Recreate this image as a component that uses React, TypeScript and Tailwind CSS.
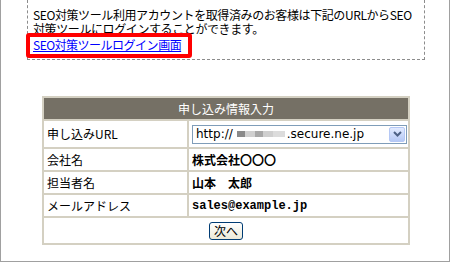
const jp = "font-['MS_UI_Gothic','Noto_Sans_CJK_JP',sans-serif]"

const Row = ({ label, children, h = "h-[21px]" }: { label: string; children: React.ReactNode; h?: string }) => (
  <>
    <div className={`${h} bg-white flex items-center pl-[3px]`}>{label}</div>
    <div className={`${h} bg-white flex items-center pl-[3px]`}>{children}</div>
  </>
)

const App = () => {
  return (
    <div className={`w-[450px] h-[262px] overflow-hidden bg-white border-x border-b border-[#a0a0a0] text-[12px] leading-[14px] text-black ${jp}`}>
      <div className="relative ml-[26px] w-[398px] border-x border-b border-dashed border-[#8c8c8c] pl-[5px] pt-[8px] pb-[7px] whitespace-nowrap">
        <p className="tracking-[-0.4px]">SEO対策ツール利用アカウントを取得済みのお客様は下記のURLからSEO</p>
        <p className="tracking-[-0.4px]">対策ツールにログインすることができます。</p>
        <a href="#" className="block mt-[2px] text-[#0000ff] underline w-fit tracking-[-0.5px]">SEO対策ツールログイン画面</a>
        <div className="absolute left-[-2px] top-[33px] w-[166px] h-[25px] border-[4px] border-[#ff0000] rounded-[3px]" />
      </div>

      <div className="mt-[36px] ml-[41px] w-[368px] border-2 border-[#d4d0c2] bg-[#d4d0c2]">
        <div className="h-[21px] bg-[#757065] text-white flex items-center justify-center">申し込み情報入力</div>
        <div className="grid grid-cols-[143px_1fr] gap-[2px] mt-[2px]">
          <Row label="申し込みURL" h="h-[26px]">
            <div className="w-[215px] h-[19px] border border-[#7f9db9] flex items-center justify-between pl-[3px] pr-[1px]">
              <div className="flex items-center font-['DejaVu_Sans',sans-serif] text-[12px]">
                <span>http://</span>
                <span className="flex ml-[4px] mr-[2px]">
                  <span className="w-[8px] h-[6px] bg-[#8a8a8a]" />
                  <span className="w-[10px] h-[6px] bg-[#d0d0d0]" />
                  <span className="w-[8px] h-[6px] bg-[#a8a8a8]" />
                  <span className="w-[10px] h-[6px] bg-[#cfcfcf]" />
                  <span className="w-[12px] h-[6px] bg-[#dcdcdc]" />
                </span>
                <span>.secure.ne.jp</span>
              </div>
              <div className="w-[16px] h-[15px] rounded-[2px] border border-[#b5c8f5] bg-gradient-to-b from-[#e2ebff] to-[#b6c9f5] flex items-center justify-center">
                <svg width="9" height="6" viewBox="0 0 9 6"><path d="M1 1 L4.5 4.5 L8 1" stroke="#4d6185" strokeWidth="2" fill="none" /></svg>
              </div>
            </div>
          </Row>
          <Row label="会社名"><b>株式会社〇〇〇</b></Row>
          <Row label="担当者名"><b>山本　太郎</b></Row>
          <Row label="メールアドレス"><b className="font-['Liberation_Mono',monospace]">sales@example.jp</b></Row>
          <div className="col-span-2 h-[25px] bg-white flex items-center justify-center">
            <button type="button" className="w-[34px] h-[18px] rounded-[3px] border border-[#003c74] bg-gradient-to-b from-white to-[#ece9d8] text-[12px] leading-[12px] flex items-center justify-center">次へ</button>
          </div>
        </div>
      </div>
    </div>
  )
}

export default App
